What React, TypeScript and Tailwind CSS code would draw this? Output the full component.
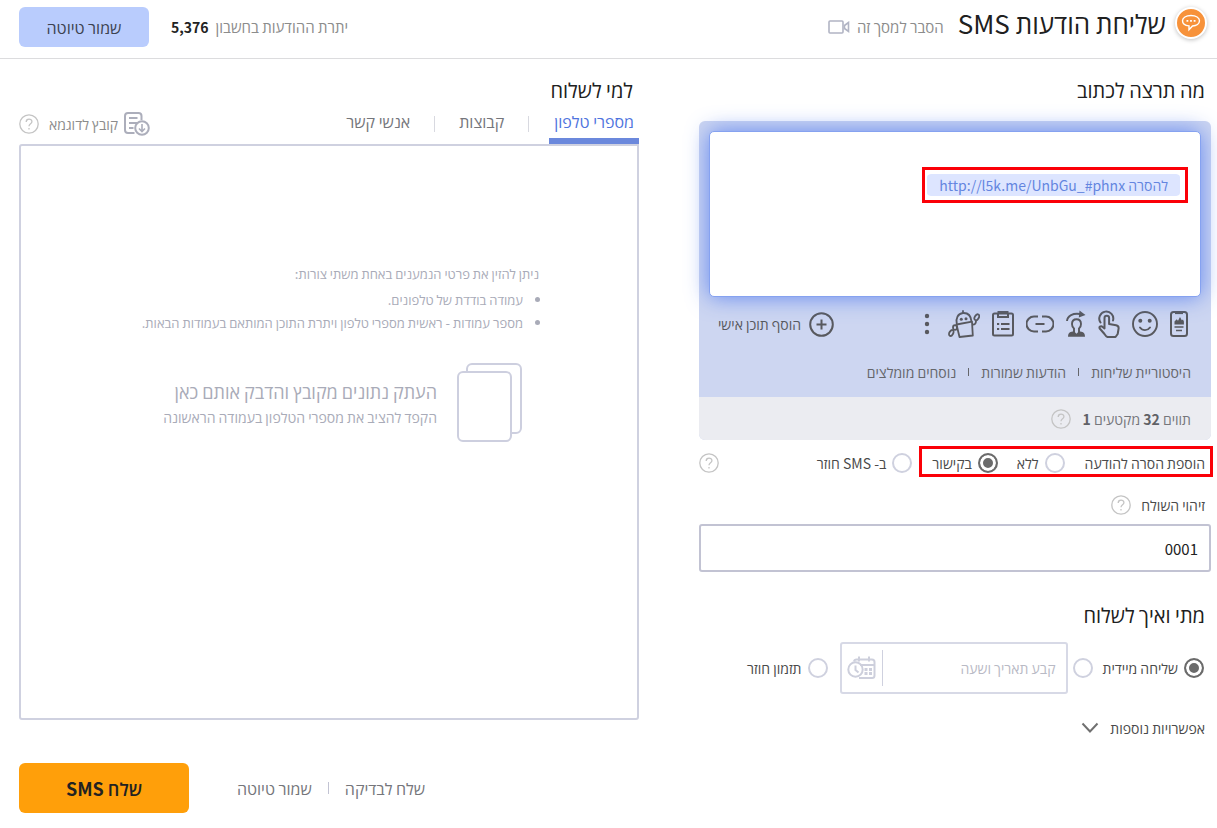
import type { ReactNode } from "react";

const messageTools: { label: string; icon: ReactNode }[] = [
  { label: "דף נחיתה", icon: <LandingIcon /> },
  { label: "אימוג'י", icon: <SmileIcon /> },
  { label: "לחיצה", icon: <TouchIcon /> },
  { label: "הפניית חבר", icon: <PersonIcon /> },
  { label: "קישור", icon: <LinkIcon /> },
  { label: "טופס", icon: <ClipboardIcon /> },
  { label: "בוט", icon: <RobotIcon /> },
  { label: "עוד", icon: <DotsIcon /> },
];

function LandingIcon() {
  return (
    <svg width="18" height="26" viewBox="0 0 18 26" fill="none" stroke="currentColor" strokeWidth="2">
      <rect x="1" y="1" width="16" height="24" rx="2.5" />
      <path d="M5 1.8h8" strokeWidth="2.6" />
      <path d="M4.500 13.500v-3l2.200-2.300 1.300 1.500 2-3.700 1.800 3.200 1.200-.7.900 2v3z" fill="currentColor" stroke="none" />
      <path d="M4.500 16h9M6 19.500h6" strokeWidth="1.600" />
    </svg>
  );
}

function SmileIcon() {
  return (
    <svg width="26" height="26" viewBox="0 0 26 26" fill="none" stroke="currentColor" strokeWidth="1.9">
      <circle cx="13" cy="13" r="12" />
      <circle cx="8.300" cy="9.800" r="2" fill="currentColor" stroke="none" />
      <circle cx="17.700" cy="9.800" r="2" fill="currentColor" stroke="none" />
      <path d="M8 16.500c2.500 3.500 7.500 3.500 10 0" strokeLinecap="round" />
    </svg>
  );
}

function TouchIcon() {
  return (
    <svg width="22" height="28" viewBox="0 0 22 28" fill="none" stroke="currentColor" strokeWidth="2" strokeLinejoin="round" strokeLinecap="round">
      <path d="M2.500 12.500A7 7 0 1 1 15 10.500" />
      <path d="M6.500 18.500V8a2.300 2.300 0 0 1 4.600 0v6l7 1.300c1.800.4 2.700 1.500 2.500 3.200l-.9 5.500-2.200 3H9.500c-1.500-.5-2-1.500-3-3l-4.800-5.500c-.8-1.500.8-2.800 2.300-2z" />
    </svg>
  );
}

function PersonIcon() {
  return (
    <svg width="20" height="28" viewBox="0 0 20 28" fill="none" stroke="currentColor" strokeWidth="1.900">
      <path d="M1 11C1.500 5.500 7 3 14 4" />
      <path d="M13.500.5 19.500 5 12.800 7.500z" fill="currentColor" stroke="none" />
      <path d="M8 24v-5.500c-1.500-1-2-2.500-2-4.500 0-3 1.500-4.800 4.500-4.800S15 11 15 14c0 2-.5 3.500-2 4.500V24" />
      <path d="M2 26.800c0-3 1.200-4.600 3.500-5l2.500-.6 2.500 2.600 2.500-2.600 2.500.6c2.300.4 3.500 2 3.500 5z" fill="currentColor" stroke="none" />
    </svg>
  );
}

function LinkIcon() {
  return (
    <svg width="28" height="18" viewBox="0 0 28 18" fill="none" stroke="currentColor" strokeWidth="2">
      <path d="M12 1.500H8a7.200 7.200 0 0 0 0 15h4M16 1.500h4a7.200 7.200 0 0 1 0 15h-4M9.500 9h9" />
    </svg>
  );
}

function ClipboardIcon() {
  return (
    <svg width="22" height="26" viewBox="0 0 22 26" fill="none" stroke="currentColor" strokeWidth="2">
      <rect x="1" y="2.500" width="20" height="22" rx="1.500" />
      <path d="M6 2v4h10V2M5.500 1h11" />
      <path d="M9 13h8.500M9 18h8.500" />
      <path d="M5 13h2.200M5 18h2.200" />
    </svg>
  );
}

function RobotIcon() {
  return (
    <svg width="32" height="28" viewBox="0 0 32 28" fill="none" stroke="currentColor" strokeWidth="1.800" strokeLinejoin="round">
      <path d="M8.800 14C7.500 8 10 3.500 15 3c5-.3 8 3 8.500 8.500" />
      <path d="M15 3V.3" />
      <path d="m8.500 14.500 15.500-2.800.8 13.800-13.300 1.500z" />
      <circle cx="13.300" cy="9.300" r="1.500" fill="currentColor" stroke="none" />
      <circle cx="18" cy="8.800" r="1.500" fill="currentColor" stroke="none" />
      <path d="M24.300 14.500c2.500.3 3.700-1 3.700-3.500" />
      <ellipse cx="3.300" cy="23" rx="1.900" ry="3.200" transform="rotate(30 3.300 23)" />
      <ellipse cx="28.800" cy="7.300" rx="2" ry="3.200" transform="rotate(30 28.800 7.300)" />
      <ellipse cx="7" cy="17.500" rx="2" ry="2.400" />
    </svg>
  );
}

function DotsIcon() {
  return (
    <svg width="6" height="22" viewBox="0 0 6 22" fill="currentColor">
      <circle cx="3" cy="3" r="2.200" />
      <circle cx="3" cy="11" r="2.200" />
      <circle cx="3" cy="19" r="2.200" />
    </svg>
  );
}

function Help() {
  return (
    <button type="button" aria-label="עזרה" className="block shrink-0 text-[#c4c4c4]">
      <svg width="20" height="20" viewBox="0 0 20 20" fill="none" stroke="currentColor" strokeWidth="1.300">
        <circle cx="10" cy="10" r="9.200" />
        <path d="M7.200 8c0-3.800 5.800-3.600 5.700-.2 0 2.100-2.900 2-2.900 4.500" />
        <path d="M10 14v1.600" />
      </svg>
    </button>
  );
}

function Radio({ name, label, checked, hideLabel }: { name: string; label: string; checked?: boolean; hideLabel?: boolean }) {
  return (
    <label className="flex shrink-0 items-center gap-1.5">
      <input
        type="radio"
        name={name}
        defaultChecked={checked}
        aria-label={label}
        className="size-5 shrink-0 appearance-none rounded-full border-2 border-[#cfd1df] bg-white checked:border-[#6b6b6b] checked:bg-[#6b6b6b] checked:shadow-[inset_0_0_0_3px_white]"
      />
      {!hideLabel && <span>{label}</span>}
    </label>
  );
}

function Header() {
  return (
    <header className="flex h-[59px] items-center border-b border-[#dcdcde] pr-[10px] pl-[19px] pb-1">
      <div className="flex items-center gap-[9px] pb-2">
        <span className="flex size-8 shrink-0 items-center justify-center rounded-full border-2 border-white bg-[#f7923a] text-white shadow-[0_1px_4px_rgba(0,0,0,0.25)]">
          <svg width="20" height="18" viewBox="0 0 20 18" fill="none" stroke="currentColor" strokeWidth="1.400">
            <path d="M10 1.500c5 0 8.500 2.200 8.500 5.300 0 2.800-3 4.900-7 5.200L8 15.800v-3.900c-3.800-.4-6.500-2.400-6.500-5.100 0-3.100 3.500-5.300 8.500-5.300z" />
            <path d="M5.500 6.800h1.800M9.100 6.800h1.800M12.700 6.800h1.800" strokeWidth="1.800" />
          </svg>
        </span>
        <h1 className="text-[26px] leading-8 text-[#202020]">שליחת הודעות SMS</h1>
      </div>
      <a href="#help" className="mr-[14px] flex items-center gap-[7px] text-[15px] leading-5 text-[#8c8c8c]">
        הסבר למסך זה
        <svg width="22" height="14" viewBox="0 0 22 14" fill="none" stroke="#b1b4c4" strokeWidth="1.600">
          <rect x="1" y="1" width="14" height="12" rx="1" />
          <path d="m20.500 2.500-4 3v3l4 3z" />
        </svg>
      </a>
      <p className="mr-auto flex items-center gap-[7px] text-[15px] leading-5 text-[#8c8c8c]">
        יתרת ההודעות בחשבון <b className="text-[14px] font-bold text-[#222]">5,376</b>
      </p>
      <button type="button" className="mr-[22px] h-10 w-[130px] rounded-md bg-[#b9ccfd] text-[16px] text-[#3c4250]">
        שמור טיוטה
      </button>
    </header>
  );
}

function MessagePanel() {
  return (
    <div className="rounded-md bg-[#cdd6f1]">
      <div className="px-[10px] pt-[10px]">
        <div className="relative">
          <textarea
            aria-label="תוכן ההודעה"
            className="block h-[166px] w-full resize-none rounded-[5px] border border-[#86a2f0] bg-white p-4 shadow-[0_0_22px_rgba(88,128,240,0.9)] outline-none"
          />
          <div className="absolute top-[36px] right-[13px] border-[3px] border-[#fb0007] px-[5px] py-[3px] pl-[2px]">
            <span className="flex h-6 items-center rounded border-y border-white bg-[#dde5ff] bg-clip-padding px-[12px] text-[14px] leading-5 text-[#6485e0]">
              להסרה http://l5k.me/UnbGu_#phnx
            </span>
          </div>
        </div>
      </div>
      <div className="flex h-[54px] items-center justify-between pr-[23px] pl-[19px] text-[#58595e]">
        <div className="flex items-center gap-3">
          {messageTools.map((tool) => (
            <button key={tool.label} type="button" aria-label={tool.label} className="last:mr-1.5">
              {tool.icon}
            </button>
          ))}
        </div>
        <button type="button" className="flex items-center gap-2 text-[14px] leading-5">
          <svg width="25" height="25" viewBox="0 0 25 25" fill="none" stroke="currentColor" strokeWidth="2">
            <circle cx="12.500" cy="12.500" r="11.300" />
            <path d="M12.500 7.500v10M7.500 12.500h10" />
          </svg>
          הוסף תוכן אישי
        </button>
      </div>
      <nav className="flex h-[46px] items-center gap-3 pr-5 pb-1 text-[14px] leading-5 text-[#65666b]">
        <a href="#history">היסטוריית שליחות</a>
        <span className="h-2 w-px bg-[#65666b]" />
        <a href="#saved">הודעות שמורות</a>
        <span className="h-2 w-px bg-[#65666b]" />
        <a href="#recommended">נוסחים מומלצים</a>
      </nav>
      <div className="flex h-[43px] items-center gap-3 rounded-b-md bg-[#ebecf1] pr-5 text-[14px] leading-5 text-[#75767b]">
        <p>
          תווים <b className="text-[#606166]">32</b> מקטעים <b className="text-[#606166]">1</b>
        </p>
        <Help />
      </div>
    </div>
  );
}

function ComposeColumn() {
  return (
    <section className="min-w-0 text-[14px] leading-5 text-[#4a4a4a]">
      <h2 className="pr-1.5 pb-[17px] text-[20px] leading-7 text-[#202020]">מה תרצה לכתוב</h2>
      <MessagePanel />
      <div className="mt-[6px] flex h-[31px] items-center">
        <fieldset className="contents">
          <div className="relative flex h-[31px] items-center pt-[3px] pr-1.5 pl-[13px]">
            <span className="ml-5">הוספת הסרה להודעה</span>
            <div className="flex gap-[19px]">
              <Radio name="removal" label="ללא" />
              <Radio name="removal" label="בקישור" checked />
            </div>
            <span className="pointer-events-none absolute inset-y-0 -right-0.5 left-0 border-[3px] border-[#fb0007]" />
          </div>
          <div className="mr-[7px] pt-[3px]">
            <Radio name="removal" label="ב- SMS חוזר" />
          </div>
        </fieldset>
        <div className="mr-auto pt-[3px]">
          <Help />
        </div>
      </div>
      <div className="mt-[18px] flex items-center gap-2.5 pr-1.5">
        <label htmlFor="sender">זיהוי השולח</label>
        <Help />
      </div>
      <input
        id="sender"
        type="text"
        defaultValue="0001"
        className="mt-[9px] block h-12 w-full rounded-[3px] border-2 border-[#c2c3d3] px-[11px] text-[15px] text-[#222] outline-none"
      />
      <h2 className="mt-[29px] pr-1.5 text-[20px] leading-7 text-[#202020]">מתי ואיך לשלוח</h2>
      <div className="mt-[13px] flex h-[52px] items-center pr-[7px]">
        <Radio name="timing" label="שליחה מיידית" checked />
        <div className="mr-2.5 flex items-center gap-[5px]">
          <Radio name="timing" label="קבע תאריך ושעה" hideLabel />
          <div className="flex h-[52px] w-[228px] items-center rounded-[3px] border-2 border-[#d7d9e6]">
            <input
              type="text"
              aria-label="תאריך ושעה"
              placeholder="קבע תאריך ושעה"
              className="h-full min-w-0 flex-1 px-2.5 outline-none placeholder:text-[#b9bac5]"
            />
            <button type="button" aria-label="בחירת תאריך" className="flex h-9 w-[41px] items-center justify-center border-r border-[#cfd1df] text-[#cdcfdc]">
              <svg width="29" height="24" viewBox="0 0 29 24" fill="none" stroke="currentColor" strokeWidth="2">
                <path d="M7 5.500c.3-1.500 1-2 2.500-2h15.500c1.500 0 2.500 1 2.500 2.500v13.500c0 1.500-1 2.500-2.500 2.500H12M13 9h14M12 .5v5M22 .5v5" />
                <circle cx="8.500" cy="13.500" r="7.200" />
                <path d="M8.500 9.500v4.500l3 2.500" />
                <path d="M17.500 13.500h3M22 13.500h3M17.500 17.500h3M22 17.500h3" strokeWidth="3" />
              </svg>
            </button>
          </div>
        </div>
        <div className="mr-3">
          <Radio name="timing" label="תזמון חוזר" />
        </div>
      </div>
      <button type="button" className="mt-6 flex items-center gap-[11px] pr-1.5">
        אפשרויות נוספות
        <svg width="18" height="12" viewBox="0 0 18 12" fill="none" stroke="#707070" strokeWidth="2">
          <path d="m1.500 1.500 7.500 8 7.500-8" />
        </svg>
      </button>
    </section>
  );
}

function RecipientsColumn() {
  return (
    <section className="min-w-0">
      <h2 className="pr-1.5 text-[20px] leading-7 text-[#202020]">למי לשלוח</h2>
      <div className="flex h-10 items-start justify-between">
        <div className="flex items-center text-[16px] text-[#75767b]">
          <button type="button" className="h-10 border-b-[6px] border-[#6b88dc] px-[5px] text-[#4f74de]">
            מספרי טלפון
          </button>
          <span className="mr-5 h-4 w-px bg-[#d8d9e0]" />
          <button type="button" className="mx-6 pb-1.5">קבוצות</button>
          <span className="h-4 w-px bg-[#d8d9e0]" />
          <button type="button" className="mr-6 pb-1.5">אנשי קשר</button>
        </div>
        <div className="mt-2 flex items-center gap-2.5 text-[14px] leading-6 text-[#8c8c8c]">
          <a href="#sample" className="flex items-center gap-1.5">
            <svg width="26" height="24" viewBox="0 0 26 24" fill="none" stroke="#acaebb" strokeWidth="2">
              <path d="M17.500 8V4c0-2-1-3-3-3H4C2 1 1 2 1 4v14c0 2 1 3 3 3h6.500" />
              <path d="M5 6h8.500M5 11h8M5 16h4.500" />
              <circle cx="18" cy="16" r="6.800" />
              <path d="M18 12v7.500M15 16.500l3 3 3-3" strokeWidth="1.600" />
            </svg>
            קובץ לדוגמא
          </a>
          <Help />
        </div>
      </div>
      <div className="h-[576px] rounded-[3px] rounded-tr-none border-2 border-[#cfd1e0] pt-[116px] pr-[98px] text-[13px] leading-[23px] text-[#a9abb8]">
        <p>ניתן להזין את פרטי הנמענים באחת משתי צורות:</p>
        <ul className="mt-[3px] list-disc pr-4">
          <li>עמודה בודדת של טלפונים.</li>
          <li>מספר עמודות - ראשית מספרי טלפון ויתרת התוכן המותאם בעמודות הבאות.</li>
        </ul>
        <div className="mt-[29px] flex items-center gap-5 pr-[17px]">
          <svg width="65" height="80" viewBox="0 0 65 80" fill="white" stroke="#cdcfdf" strokeWidth="2">
            <rect x="10" y="1" width="54" height="69" rx="5" />
            <rect x="1" y="9" width="53" height="69" rx="5" />
          </svg>
          <div>
            <p className="text-[18px] leading-7 font-medium">העתק נתונים מקובץ והדבק אותם כאן</p>
            <p className="text-[14px] leading-6">הקפד להציב את מספרי הטלפון בעמודה הראשונה</p>
          </div>
        </div>
      </div>
      <div className="mt-[43px] flex h-[50px] items-center justify-end text-[16px] text-[#75767b]">
        <button type="button">שלח לבדיקה</button>
        <span className="mx-4 h-3 w-px bg-[#c2c3d3]" />
        <button type="button">שמור טיוטה</button>
        <button type="button" className="mr-12 h-[50px] w-[170px] rounded-md bg-[#ff9f0a] text-[18px] font-semibold text-[#222]">
          שלח SMS
        </button>
      </div>
    </section>
  );
}

export default function App() {
  return (
    <div dir="rtl" lang="he" className="min-h-screen bg-white font-['Noto_Sans_CJK_JP','Open_Sans',sans-serif]">
      <Header />
      <main className="grid grid-cols-[512fr_620fr] gap-[60px] pt-[17px] pr-[6px] pl-[19px]">
        <ComposeColumn />
        <RecipientsColumn />
      </main>
    </div>
  );
}
